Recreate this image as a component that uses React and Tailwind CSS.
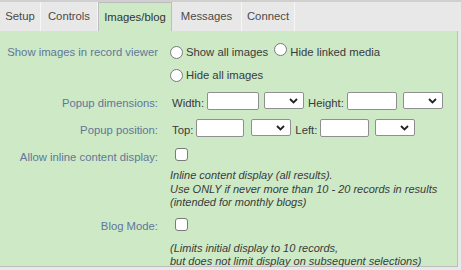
const tabs = [
  { name: "Setup", w: "w-[41px]" },
  { name: "Controls", w: "w-[57px]" },
  { name: "Images/blog", w: "w-[74px]", active: true },
  { name: "Messages", w: "w-[70px]" },
  { name: "Connect", w: "w-[53px]" },
];

const Radio = () => (
  <span className="inline-block w-[13px] h-[13px] rounded-full bg-white border border-[#7a7a7a] shrink-0" />
);

const Checkbox = () => (
  <span className="inline-block w-[13px] h-[13px] rounded-[3px] bg-white border border-[#7a7a7a] shrink-0" />
);

const TextBox = ({ w }) => (
  <span className={`inline-block ${w} h-[18px] bg-white border border-[#8f8f8f] rounded-[2px] shrink-0`} />
);

const Select = () => (
  <span className="relative inline-block w-[40px] h-[17px] bg-white border border-[#8f8f8f] rounded-[2px] shrink-0">
    <svg className="absolute right-[5px] top-[5px]" width="9" height="6" viewBox="0 0 9 6">
      <polyline points="1,1 4.5,4.5 8,1" fill="none" stroke="#222" strokeWidth="1.8" />
    </svg>
  </span>
);

const Label = ({ children, className = "" }) => (
  <div className={`w-[170px] shrink-0 text-right pr-[12px] text-[#61779a] ${className}`}>{children}</div>
);

export default function App() {
  return (
    <div className="w-[461px] h-[270px] bg-[#e9e9e9] font-['Liberation_Sans',Arial,sans-serif] text-[11.3px] overflow-hidden">
      <div className="h-[2px] bg-[#d0d0d0]" />
      {/* Tabs */}
      <div className="flex h-[29px] w-[458px] bg-[#e8e8e8]">
        {tabs.map((t) => (
          <div
            key={t.name}
            className={`${t.w} flex items-center justify-center ${
              t.active
                ? "bg-[#cde9c6] border-t border-l border-r border-[#bdbdbd] text-[#333]"
                : "bg-[#e8e8e8] border-r border-[#f6f6f6] text-[#4a4a4a]"
            }`}
          >
            {t.name}
          </div>
        ))}
      </div>

      {/* Panel */}
      <div className="w-[458px] h-[236px] bg-[#cde9c6] border-r border-b border-[#bdbdbd] pt-[12px]">
        <div className="flex items-center h-[18px]">
          <Label className="pr-[8px] whitespace-nowrap">Show images in record viewer</Label>
          <div className="flex items-center text-[#3a3a3a]">
            <Radio />
            <span className="ml-[3px]">Show all images</span>
            <span className="ml-[6px]"><Radio /></span>
            <span className="ml-[3px]">Hide linked media</span>
          </div>
        </div>
        <div className="flex items-center h-[18px] mt-[5px]">
          <Label />
          <div className="flex items-center text-[#3a3a3a]">
            <Radio />
            <span className="ml-[3px]">Hide all images</span>
          </div>
        </div>

        <div className="flex items-center h-[18px] mt-[10px]">
          <Label>Popup dimensions:</Label>
          <div className="flex items-center text-[#3a3a3a] pl-[2px]">
            <span>Width:</span>
            <span className="ml-[3px]"><TextBox w="w-[52px]" /></span>
            <span className="ml-[5px]"><Select /></span>
            <span className="ml-[4px]">Height:</span>
            <span className="ml-[3px]"><TextBox w="w-[50px]" /></span>
            <span className="ml-[6px]"><Select /></span>
          </div>
        </div>

        <div className="flex items-center h-[18px] mt-[9px]">
          <Label>Popup position:</Label>
          <div className="flex items-center text-[#3a3a3a] pl-[2px]">
            <span>Top:</span>
            <span className="ml-[3px]"><TextBox w="w-[48px]" /></span>
            <span className="ml-[7px]"><Select /></span>
            <span className="ml-[4px]">Left:</span>
            <span className="ml-[3px]"><TextBox w="w-[49px]" /></span>
            <span className="ml-[6px]"><Select /></span>
          </div>
        </div>

        <div className="flex items-center h-[18px] mt-[9px]">
          <Label>Allow inline content display:</Label>
          <span className="ml-[5px]"><Checkbox /></span>
        </div>
        <div className="flex mt-[3px]">
          <Label />
          <div className="italic text-[#3a3a3a] text-[11px] leading-[13.5px]">
            <div>Inline content display (all results).</div>
            <div>Use ONLY if never more than 10 - 20 records in results</div>
            <div>(intended for monthly blogs)</div>
          </div>
        </div>

        <div className="flex items-center h-[18px] mt-[8px]">
          <Label>Blog Mode:</Label>
          <span className="ml-[5px]"><Checkbox /></span>
        </div>
        <div className="flex mt-[6px]">
          <Label />
          <div className="italic text-[#3a3a3a] text-[11px] leading-[13px]">
            <div>(Limits initial display to 10 records,</div>
            <div>but does not limit display on subsequent selections)</div>
          </div>
        </div>
      </div>
    </div>
  );
}
